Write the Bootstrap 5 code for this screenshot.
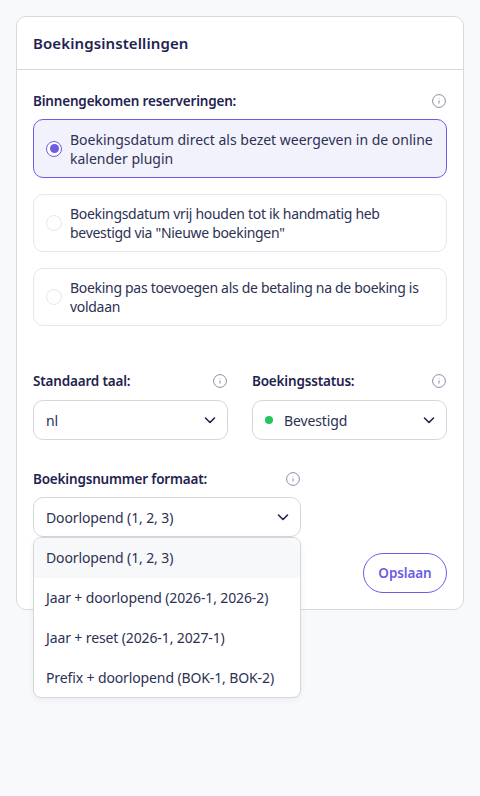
<!DOCTYPE html>
<html lang="nl"><head><meta charset="utf-8">
<meta name="viewport" content="width=device-width, initial-scale=1">
<title>Boekingsinstellingen</title>
<link href="https://cdn.jsdelivr.net/npm/bootstrap@5.3.0/dist/css/bootstrap.min.css" rel="stylesheet">
<style>
html,body{height:100%}
body{background:#f8f9fb;font-family:"Noto Sans","Open Sans",sans-serif;color:#1f2350;font-size:14px;padding:16px}
.shell{border:1px solid #d8d9de;border-radius:10px;background:#fff;height:594px}
.shell-head{height:53px;border-bottom:1px solid #d8d9de;padding:0 16px;font-size:15px;font-weight:600;letter-spacing:.1px}
.shell-body{padding:21px 16px 0}
.lbl{height:20px;font-weight:600;font-size:13.5px;line-height:20px;margin-bottom:8px;letter-spacing:-.18px}
.info{width:14px;height:14px;display:block;flex:none;margin-right:1px}
.opt{border:1px solid #e8e8ec;border-radius:10px;padding:0 12px;height:58px;margin-bottom:16px;gap:8px;line-height:19px;color:#2d3154;font-size:14px}
.opt.on{background:#f2f2fc;border-color:#6c5ce7;height:59px}
.tight{letter-spacing:-.3px}
.rad{width:16px;height:16px;border-radius:50%;border:1px solid #e8e8ec;flex:none}
.on .rad{border:1.5px solid #6c5ce7;background:#fff;display:flex;align-items:center;justify-content:center}
.on .rad::after{content:"";width:9px;height:9px;border-radius:50%;background:#6c5ce7}
.pick{height:40px;border:1px solid #d5d6dc;border-radius:10px;padding:0 10px 0 12px;background:#fff;color:#2d3154;letter-spacing:-.12px}
.pick svg{width:14px;height:14px;flex:none}
.dotg{width:8px;height:8px;border-radius:50%;background:#22c55e;margin-right:11px;flex:none}
.gaprow{margin-top:45px;--bs-gutter-x:24px}
.gaprow .lbl{margin-bottom:9px}
.numwrap{width:268px;margin-top:29px;position:relative}
.numwrap>.lbl{margin-bottom:8px}
.numlist{position:absolute;left:0;right:0;top:100%;background:#fff;border:1px solid #d5d6dc;border-radius:8px;overflow:hidden;z-index:5;box-shadow:0 2px 6px rgba(30,30,60,.06);letter-spacing:-.12px}
.numlist div{height:40px;line-height:40px;padding:0 12px;color:#2d3154}
.numlist div:first-child{background:#f7f8fa}
.numlist div:last-child{height:39px}
.savebtn{border:1px solid #6c5ce7;color:#6c5ce7;border-radius:20px;background:#fff;height:40px;width:84px;font-weight:600;font-size:13.5px;letter-spacing:-.1px;padding:0}
.saverow{margin-top:16px}
</style></head><body>
<div class="shell">
<div class="shell-head d-flex align-items-center">Boekingsinstellingen</div>
<div class="shell-body">
<div class="lbl d-flex justify-content-between align-items-center"><span>Binnengekomen reserveringen:</span><svg class="info" viewBox="0 0 14 14" fill="none" stroke="#8b8da8"><circle cx="7" cy="7" r="6.4"/><path d="M7 6.4v3.2M7 4.2v.6"/></svg></div>
<div class="opt on d-flex align-items-center"><span class="rad"></span><span>Boekingsdatum direct als bezet weergeven in de online kalender plugin</span></div>
<div class="opt d-flex align-items-center"><span class="rad"></span><span class="tight">Boekingsdatum vrij houden tot ik handmatig heb<br>bevestigd via "Nieuwe boekingen"</span></div>
<div class="opt d-flex align-items-center"><span class="rad"></span><span class="tight">Boeking pas toevoegen als de betaling na de boeking is<br>voldaan</span></div>
<div class="row gaprow">
<div class="col-6"><div class="lbl d-flex justify-content-between align-items-center"><span>Standaard taal:</span><svg class="info" viewBox="0 0 14 14" fill="none" stroke="#8b8da8"><circle cx="7" cy="7" r="6.4"/><path d="M7 6.4v3.2M7 4.2v.6"/></svg></div>
<div class="pick d-flex align-items-center justify-content-between"><span>nl</span><svg viewBox="0 0 14 14" fill="none" stroke="#1f2350" stroke-width="1.6" stroke-linecap="round" stroke-linejoin="round"><path d="M2.5 5l4.5 4.5L11.5 5"/></svg></div></div>
<div class="col-6"><div class="lbl d-flex justify-content-between align-items-center"><span>Boekingsstatus:</span><svg class="info" viewBox="0 0 14 14" fill="none" stroke="#8b8da8"><circle cx="7" cy="7" r="6.4"/><path d="M7 6.4v3.2M7 4.2v.6"/></svg></div>
<div class="pick d-flex align-items-center"><span class="dotg"></span><span class="flex-grow-1">Bevestigd</span><svg viewBox="0 0 14 14" fill="none" stroke="#1f2350" stroke-width="1.6" stroke-linecap="round" stroke-linejoin="round"><path d="M2.5 5l4.5 4.5L11.5 5"/></svg></div></div>
</div>
<div class="numwrap">
<div class="lbl d-flex justify-content-between align-items-center"><span>Boekingsnummer formaat:</span><svg class="info" viewBox="0 0 14 14" fill="none" stroke="#8b8da8"><circle cx="7" cy="7" r="6.4"/><path d="M7 6.4v3.2M7 4.2v.6"/></svg></div>
<div class="pick d-flex align-items-center justify-content-between"><span>Doorlopend (1, 2, 3)</span><svg viewBox="0 0 14 14" fill="none" stroke="#1f2350" stroke-width="1.6" stroke-linecap="round" stroke-linejoin="round"><path d="M2.5 5l4.5 4.5L11.5 5"/></svg></div>
<div class="numlist"><div>Doorlopend (1, 2, 3)</div><div>Jaar + doorlopend (2026-1, 2026-2)</div><div>Jaar + reset (2026-1, 2027-1)</div><div>Prefix + doorlopend (BOK-1, BOK-2)</div></div>
</div>
<div class="saverow d-flex justify-content-end"><button class="savebtn btn" type="button">Opslaan</button></div>
</div>
</div>
<script src="https://cdn.jsdelivr.net/npm/bootstrap@5.3.0/dist/js/bootstrap.bundle.min.js"></script>
</body></html>
